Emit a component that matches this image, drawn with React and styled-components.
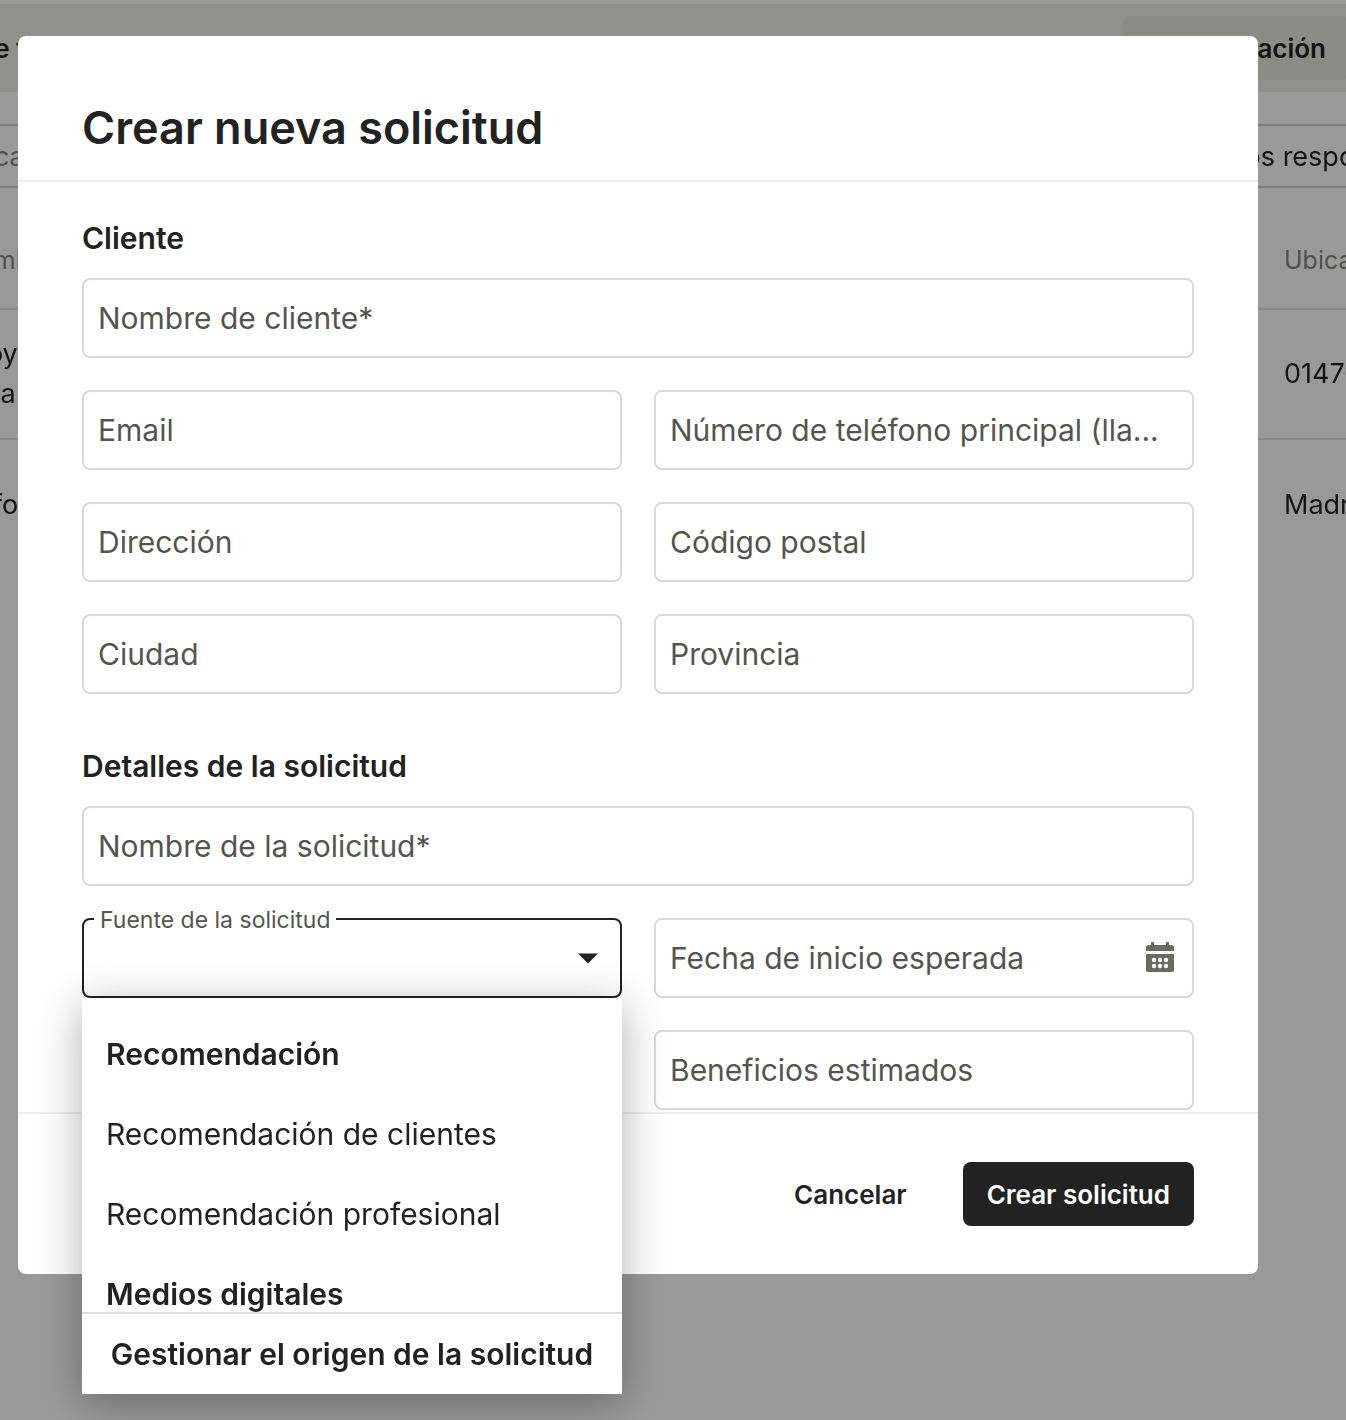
import { useState } from "react";
import styled, { createGlobalStyle } from "styled-components";

const SOURCES = [
  { name: "Recomendación", group: true },
  { name: "Recomendación de clientes" },
  { name: "Recomendación profesional" },
  { name: "Medios digitales", group: true },
];

const CLIENT_FIELDS = [
  { name: "email", label: "Email" },
  { name: "phone", label: "Número de teléfono principal (lla..." },
  { name: "address", label: "Dirección" },
  { name: "zip", label: "Código postal" },
  { name: "city", label: "Ciudad" },
  { name: "province", label: "Provincia" },
];

function CalendarIcon() {
  return (
    <svg width="28" height="30" viewBox="0 0 28 30" aria-hidden="true">
      <path
        fill="#6b6b65"
        fillRule="evenodd"
        d="M5 0h3v3h12V0h3v3h2a3 3 0 0 1 3 3v3H0V6a3 3 0 0 1 3-3h2zM0 12h28v16a2 2 0 0 1-2 2H2a2 2 0 0 1-2-2z"
      />
      <g fill="#fff">
        <circle cx="8" cy="18" r="2.2" />
        <circle cx="14" cy="18" r="2.2" />
        <circle cx="20" cy="18" r="2.2" />
        <circle cx="8" cy="24" r="2.2" />
        <circle cx="14" cy="24" r="2.2" />
        <circle cx="20" cy="24" r="2.2" />
      </g>
    </svg>
  );
}

function Field({ name, label, wide }) {
  return <Input id={name} name={name} placeholder={label} aria-label={label} $wide={wide} />;
}

function RequestsPage() {
  return (
    <Screen>
      <Page>
        <TabBar>
          <Tab>de trabajo</Tab>
          <Tab $active>Configuración</Tab>
        </TabBar>
        <Filters>
          <Search placeholder="Buscar" aria-label="Buscar" />
          <Filter>Todos los responsables</Filter>
        </Filters>
        <Table>
          <thead>
            <tr>
              <th>Nombre</th>
              <th>Ubicación</th>
            </tr>
          </thead>
          <tbody>
            <tr>
              <td>
                Proyecto
                <br />
                Lara
              </td>
              <td>01470</td>
            </tr>
            <tr>
              <td>Reforma</td>
              <td>Madrid</td>
            </tr>
          </tbody>
        </Table>
      </Page>
    </Screen>
  );
}

function SourceSelect() {
  const [source, setSource] = useState("");

  return (
    <SelectBox>
      <Select id="source" value={source} onChange={(e) => setSource(e.target.value)}>
        <option value=""></option>
        {SOURCES.filter((item) => !item.group).map((item) => (
          <option key={item.name}>{item.name}</option>
        ))}
      </Select>
      <SelectLabel htmlFor="source">Fuente de la solicitud</SelectLabel>
      <Caret width="20" height="11" viewBox="0 0 20 11" aria-hidden="true">
        <path d="M0 0.5h20L10 10.5z" fill="#222" />
      </Caret>
      <Menu>
        <Options>
          {SOURCES.map((item) =>
            item.group ? (
              <GroupName key={item.name}>{item.name}</GroupName>
            ) : (
              <li key={item.name}>
                <Option type="button" onClick={() => setSource(item.name)}>
                  {item.name}
                </Option>
              </li>
            )
          )}
        </Options>
        <ManageButton type="button">Gestionar el origen de la solicitud</ManageButton>
      </Menu>
    </SelectBox>
  );
}

function App() {
  return (
    <>
      <GlobalStyle />
      <RequestsPage />

      <Overlay>
        <Modal role="dialog" aria-labelledby="modal-title">
          <Header>
            <h1 id="modal-title">Crear nueva solicitud</h1>
          </Header>

          <Body>
            <SectionTitle>Cliente</SectionTitle>
            <Fields>
              <Field name="client" label="Nombre de cliente*" wide />
              {CLIENT_FIELDS.map((field) => (
                <Field key={field.name} {...field} />
              ))}
            </Fields>

            <SectionTitle>Detalles de la solicitud</SectionTitle>
            <Fields>
              <Field name="request" label="Nombre de la solicitud*" wide />
              <SourceSelect />
              <DateBox>
                <Field name="start" label="Fecha de inicio esperada" />
                <DateButton type="button" aria-label="Abrir calendario">
                  <CalendarIcon />
                </DateButton>
              </DateBox>
              <SecondColumn>
                <Field name="profit" label="Beneficios estimados" />
              </SecondColumn>
            </Fields>
          </Body>

          <Footer>
            <Button type="button">Cancelar</Button>
            <Button type="button" $primary>
              Crear solicitud
            </Button>
          </Footer>
        </Modal>
      </Overlay>
    </>
  );
}

const GlobalStyle = createGlobalStyle`
  * {
    box-sizing: border-box;
  }
  body {
    margin: 0;
    background-color: #fff;
    color: #222;
    font-family: Inter, "Liberation Sans", sans-serif;
    font-size: 30px;
  }
  button, input, select {
    font: inherit;
    color: inherit;
  }
  button {
    border: 0;
    padding: 0;
    background: none;
    cursor: pointer;
  }
`;

const Screen = styled.div`
  position: fixed;
  inset: 0;
  overflow: hidden;
`;

/* wider than the window, so both sides run out of view */
const Page = styled.div`
  margin: 0 -200px 0 -64px;
  padding-top: 4px;
  font-size: 27px;
`;

const TabBar = styled.nav`
  display: flex;
  justify-content: space-between;
  padding: 12px 196px 12px 18px;
  background-color: #f1f1e9;
`;

const Tab = styled.button`
  height: 64px;
  padding: 0 24px;
  border-radius: 8px;
  font-size: 26px;
  font-weight: 600;
  background-color: ${(props) => (props.$active ? "#e8e9de" : "transparent")};
`;

const Filters = styled.div`
  display: flex;
  justify-content: space-between;
  padding: 32px 64px 0 0;
`;

const Search = styled.input`
  width: 400px;
  height: 64px;
  padding: 0 8px;
  border: 2px solid #d0d0c8;
  border-radius: 8px;
  &::placeholder {
    color: #85857f;
    opacity: 1;
  }
`;

const Filter = styled.button`
  width: 348px;
  height: 64px;
  padding: 0 16px;
  border: 2px solid #d0d0c8;
  border-radius: 8px;
  text-align: left;
  white-space: nowrap;
`;

const Table = styled.table`
  width: 100%;
  table-layout: fixed;
  border-collapse: collapse;
  line-height: 40px;
  text-align: left;
  th,
  td {
    padding: 0 24px;
    height: 130px;
  }
  th {
    height: 121px;
    padding-top: 24px;
    font-size: 25px;
    font-weight: 400;
    color: #85857f;
  }
  th:last-child {
    width: 286px;
  }
  thead tr,
  tbody tr:first-child {
    border-bottom: 2px solid #e6e6df;
  }
`;

const Overlay = styled.div`
  position: relative;
  min-height: 100vh;
  padding: 36px 88px 36px 18px;
  background-color: rgba(0, 0, 0, 0.4);
`;

const Modal = styled.section`
  border-radius: 8px;
  background-color: #fff;
`;

const Header = styled.header`
  padding: 62px 64px 22px;
  border-bottom: 2px solid #eeeeec;
  h1 {
    margin: 0;
    font-size: 45px;
    line-height: 60px;
    font-weight: 600;
  }
`;

const Body = styled.form`
  padding: 32px 64px 2px;
`;

const SectionTitle = styled.h2`
  margin: 0 0 16px;
  font-size: 30px;
  line-height: 48px;
  font-weight: 600;
  div + & {
    margin-top: 48px;
  }
`;

const Fields = styled.div`
  display: grid;
  grid-template-columns: 1fr 1fr;
  gap: 32px;
`;

const Input = styled.input`
  grid-column: ${(props) => (props.$wide ? "1 / -1" : "auto")};
  width: 100%;
  height: 80px;
  padding: 0 14px;
  border: 2px solid #dadad2;
  border-radius: 8px;
  background-color: #fff;
  text-overflow: ellipsis;
  &::placeholder {
    color: #55554f;
    opacity: 1;
  }
`;

const SecondColumn = styled.div`
  grid-column: 2;
`;

const DateBox = styled.div`
  position: relative;
`;

const DateButton = styled.button`
  position: absolute;
  top: 24px;
  right: 20px;
  display: flex;
`;

const SelectBox = styled.div`
  position: relative;
`;

const Select = styled.select`
  appearance: none;
  display: block;
  width: 100%;
  height: 80px;
  padding: 0 64px 0 14px;
  border: 2px solid #222;
  border-radius: 8px;
  background-color: #fff;
`;

const SelectLabel = styled.label`
  position: absolute;
  top: -12px;
  left: 12px;
  padding: 0 6px;
  background-color: #fff;
  color: #55554f;
  font-size: 23px;
  line-height: 28px;
`;

const Caret = styled.svg`
  position: absolute;
  top: 35px;
  right: 24px;
  pointer-events: none;
`;

const Menu = styled.div`
  position: absolute;
  z-index: 1;
  top: 100%;
  left: 0;
  right: 0;
  background-color: #fff;
  box-shadow: 0 8px 40px rgba(0, 0, 0, 0.32);
`;

const Options = styled.ul`
  max-height: 314px;
  margin: 0;
  padding: 16px 0 0;
  overflow: hidden;
  list-style: none;
`;

const GroupName = styled.li`
  padding: 0 24px;
  line-height: 80px;
  font-weight: 600;
`;

const Option = styled.button`
  width: 100%;
  padding: 0 24px;
  line-height: 80px;
  text-align: left;
`;

const ManageButton = styled.button`
  width: 100%;
  border-top: 2px solid #dfdfd7;
  line-height: 80px;
  font-weight: 600;
  white-space: nowrap;
`;

const Footer = styled.footer`
  display: flex;
  justify-content: flex-end;
  gap: 32px;
  padding: 48px 64px;
  border-top: 2px solid #eeeeec;
`;

const Button = styled.button`
  height: 64px;
  padding: 0 24px;
  border-radius: 8px;
  font-size: 26px;
  font-weight: 600;
  background-color: ${(props) => (props.$primary ? "#222" : "transparent")};
  color: ${(props) => (props.$primary ? "#fff" : "#222")};
`;

export default App;
